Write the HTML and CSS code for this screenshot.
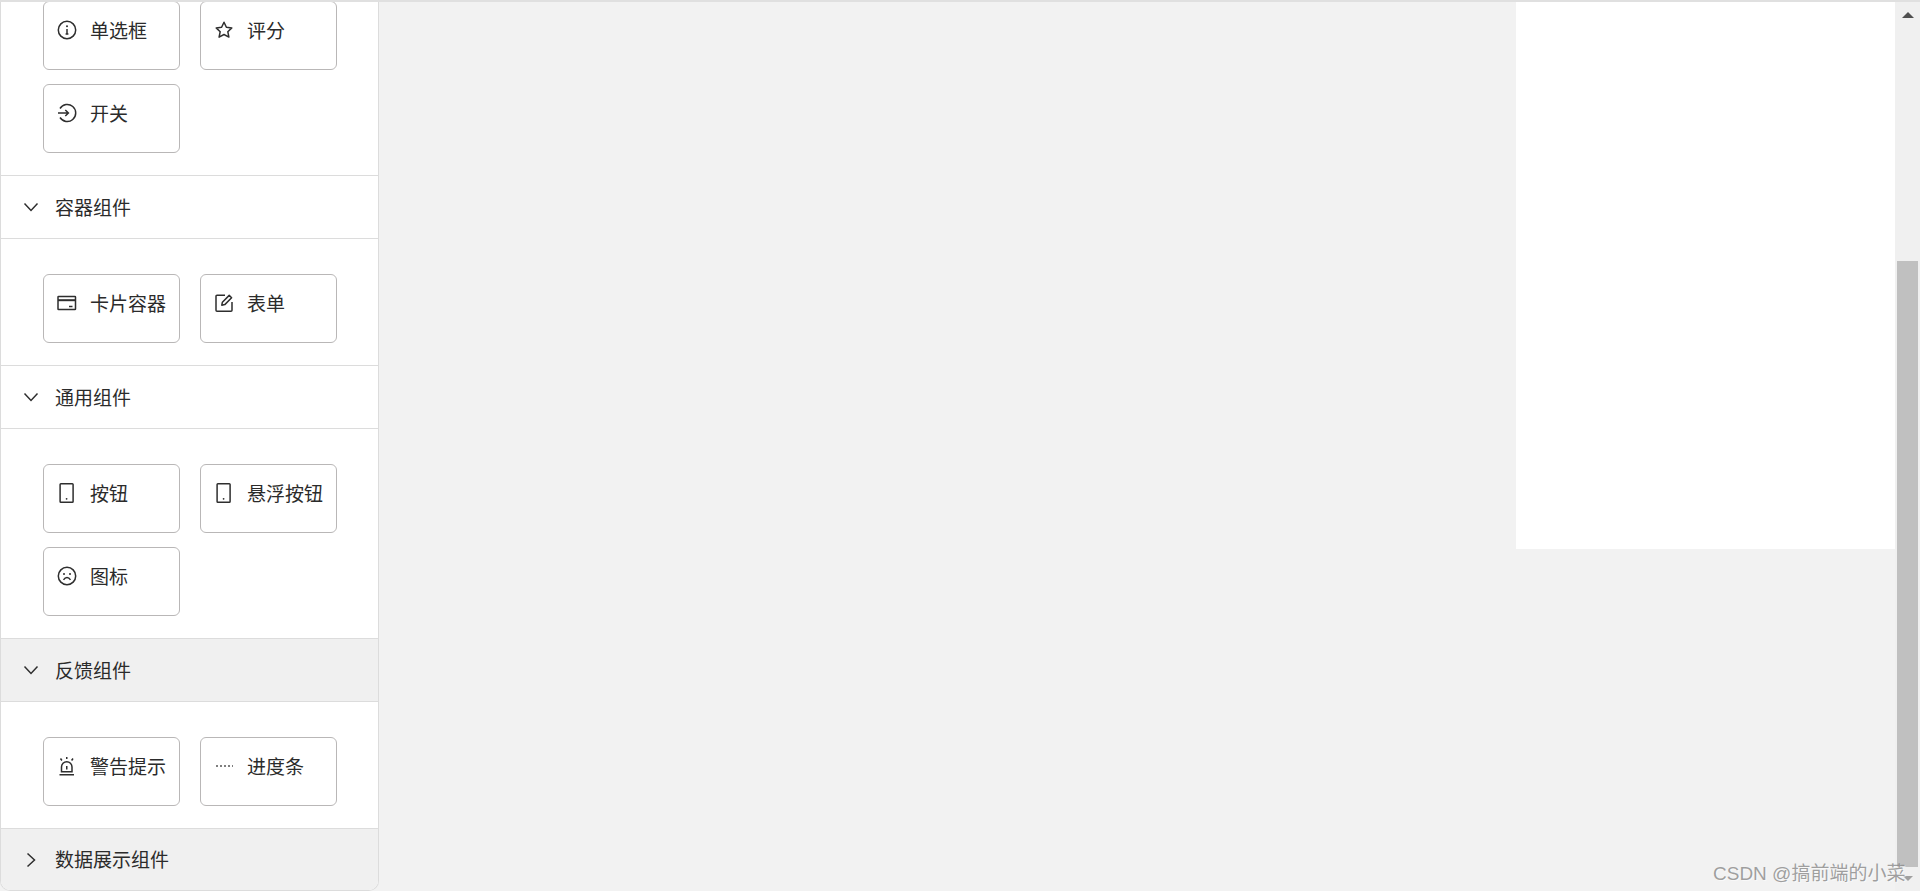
FILE: index.html
```html
<!DOCTYPE html>
<html lang="zh-CN">
<head>
<meta charset="utf-8">
<title>组件</title>
<link rel="stylesheet" href="styles.css">
</head>
<body>
<div class="topline"></div>
<div class="page">
  <aside class="sidebar">
    <div class="panel panel-first">
      <div class="grid">
        <div class="item"><svg class="icon" viewBox="0 0 20 20"><circle cx="10" cy="10" r="8.700"/><path d="M10 9v5M8.600 14h2.800"/><circle class="solid" cx="10" cy="6.300" r="1"/></svg><span>单选框</span></div>
        <div class="item"><svg class="icon" viewBox="0 0 20 20"><path class="join" d="M10 2.200l2.400 5 5.400.7-4 3.800 1.100 5.400L10 14.500l-4.900 2.600 1.100-5.400-4-3.800 5.400-.7z"/></svg><span>评分</span></div>
        <div class="item"><svg class="icon" viewBox="0 0 20 20"><path d="M3 5.500a8.500 8.500 0 1 1 0 9M1 10h10.400M8.300 7l3.100 3-3.100 3"/></svg><span>开关</span></div>
      </div>
    </div>
    <div class="head"><svg class="chev" viewBox="0 0 16 16"><path d="M1.500 4.500L8 11.500l6.500-7"/></svg><span>容器组件</span></div>
    <div class="panel">
      <div class="grid">
        <div class="item"><svg class="icon" viewBox="0 0 20 20"><rect x="1" y="3.500" width="17.500" height="13" rx=".6"/><path class="band" d="M1 7.200h17.500"/><path d="M12 13.500h3.500"/></svg><span>卡片容器</span></div>
        <div class="item"><svg class="icon" viewBox="0 0 20 20"><path d="M11 2.200H3a1 1 0 0 0-1 1v14a1 1 0 0 0 1 1h14a1 1 0 0 0 1-1V9"/><path class="join" d="M7.800 12.200l.6-3L15.200 2.400l2.400 2.400-6.800 6.800z"/></svg><span>表单</span></div>
      </div>
    </div>
    <div class="head"><svg class="chev" viewBox="0 0 16 16"><path d="M1.500 4.500L8 11.500l6.500-7"/></svg><span>通用组件</span></div>
    <div class="panel">
      <div class="grid">
        <div class="item"><svg class="icon" viewBox="0 0 20 20"><rect x="3.100" y=".800" width="13" height="18.400" rx=".8"/><circle class="solid" cx="9.600" cy="15.800" r=".9"/></svg><span>按钮</span></div>
        <div class="item"><svg class="icon" viewBox="0 0 20 20"><rect x="3.100" y=".800" width="13" height="18.400" rx=".8"/><circle class="solid" cx="9.600" cy="15.800" r=".9"/></svg><span>悬浮按钮</span></div>
        <div class="item"><svg class="icon" viewBox="0 0 20 20"><circle cx="10" cy="10" r="8.700"/><circle class="solid" cx="7" cy="8" r="1"/><circle class="solid" cx="13" cy="8" r="1"/><path d="M6.500 13.800c1-1.500 2.200-2.200 3.500-2.200s2.500.7 3.500 2.200"/></svg><span>图标</span></div>
      </div>
    </div>
    <div class="head head-hover"><svg class="chev" viewBox="0 0 16 16"><path d="M1.500 4.500L8 11.500l6.500-7"/></svg><span>反馈组件</span></div>
    <div class="panel">
      <div class="grid">
        <div class="item"><svg class="icon" viewBox="0 0 20 20"><path d="M2.500 18.800h14.500M4.500 15.800V11a5.250 5.250 0 0 1 10.500 0v4.800zM9.750 10v3.500M9.750 1v2M3.500 2.500l1.400 2M16 2.500l-1.400 2"/></svg><span>警告提示</span></div>
        <div class="item"><svg class="icon" viewBox="0 0 20 20"><path class="dots" d="M2 10h17"/></svg><span>进度条</span></div>
      </div>
    </div>
    <div class="head head-hover head-last"><svg class="chev" viewBox="0 0 16 16"><path d="M4.500 1.500L11.500 8l-7 6.500"/></svg><span>数据展示组件</span></div>
  </aside>
  <main class="main">
    <div class="canvas"></div>
  </main>
  <div class="scrollbar">
    <div class="arrow-up"></div>
    <div class="thumb"></div>
    <div class="arrow-down"></div>
  </div>
</div>
<div class="watermark">CSDN @搞前端的小菜</div>
</body>
</html>
```

FILE: styles.css
```css
* {
  box-sizing: border-box;
}

html,
body {
  margin: 0;
  height: 100%;
  overflow: hidden;
}

body {
  background: #f2f2f2;
  color: #2b2b2b;
  font-family: "Liberation Sans", "Noto Sans CJK SC", sans-serif;
  font-size: 19px;
}

.topline {
  height: 2px;
  background: #e0e0e0;
}

.page {
  display: flex;
  height: 889px;
}

.sidebar {
  width: 379px;
  flex: none;
  height: 889px;
  overflow: hidden;
  background: #fff;
  border-left: 1px solid #dcdcdc;
  border-right: 1px solid #dcdcdc;
  border-bottom: 1px solid #dcdcdc;
  border-radius: 0 0 10px 10px;
}

.panel {
  padding: 35px 0 22px 42px;
}

.panel-first {
  padding-top: 0;
}

.panel-first .grid {
  margin-top: -1px;
}

.grid {
  display: grid;
  grid-template-columns: 137px 137px;
  grid-auto-rows: 69px;
  gap: 14px 20px;
}

.item {
  display: flex;
  align-items: center;
  height: 69px;
  padding: 9px 0 22px 13px;
  gap: 13px;
  background: #fff;
  border: 1px solid #b9b7b7;
  border-radius: 6px;
  white-space: nowrap;
}

.icon {
  width: 20px;
  height: 20px;
  flex: none;
  margin-top: 2px;
  fill: none;
  stroke: #2e2e2e;
  stroke-width: 1.500;
}

.icon .solid {
  fill: #2e2e2e;
  stroke: none;
}

.icon .join {
  stroke-linejoin: round;
}

.icon .band {
  stroke-width: 2;
}

.icon .dots {
  stroke-dasharray: 2 2;
  stroke-width: 1.600;
  stroke: #555;
}

.head {
  display: flex;
  align-items: center;
  gap: 16px;
  height: 64px;
  padding: 0 0 0 22px;
  border-top: 1px solid #dcdcdc;
  border-bottom: 1px solid #dcdcdc;
}

.head span {
  margin-bottom: 2px;
}

.head-hover {
  background: #f0f0f0;
}

.head-last {
  height: 62px;
  border-bottom: 0;
}

.chev {
  width: 16px;
  height: 16px;
  flex: none;
  fill: none;
  stroke: #2e2e2e;
  stroke-width: 1.500;
}

.main {
  flex: 1;
  display: flex;
  justify-content: flex-end;
  align-items: flex-start;
}

.canvas {
  width: 379px;
  height: 547px;
  background: #fff;
}

.scrollbar {
  width: 25px;
  flex: none;
  background: #f0f0f0;
  display: flex;
  flex-direction: column;
  align-items: center;
  padding-top: 10px;
}

.arrow-up {
  width: 0;
  height: 0;
  border-left: 6px solid transparent;
  border-right: 6px solid transparent;
  border-bottom: 6px solid #505050;
}

.thumb {
  width: 21px;
  height: 606px;
  margin-top: 243px;
  background: #c0c0c0;
}

.arrow-down {
  width: 0;
  height: 0;
  margin-top: 9px;
  border-left: 5px solid transparent;
  border-right: 5px solid transparent;
  border-top: 5px solid #a0a0a0;
}

.watermark {
  position: absolute;
  left: 1713px;
  top: 862px;
  line-height: 24px;
  font-size: 19px;
  white-space: nowrap;
  color: rgba(130, 130, 130, 0.75);
  text-shadow: 1px 1px 1px rgba(255, 255, 255, 0.6);
}
```
